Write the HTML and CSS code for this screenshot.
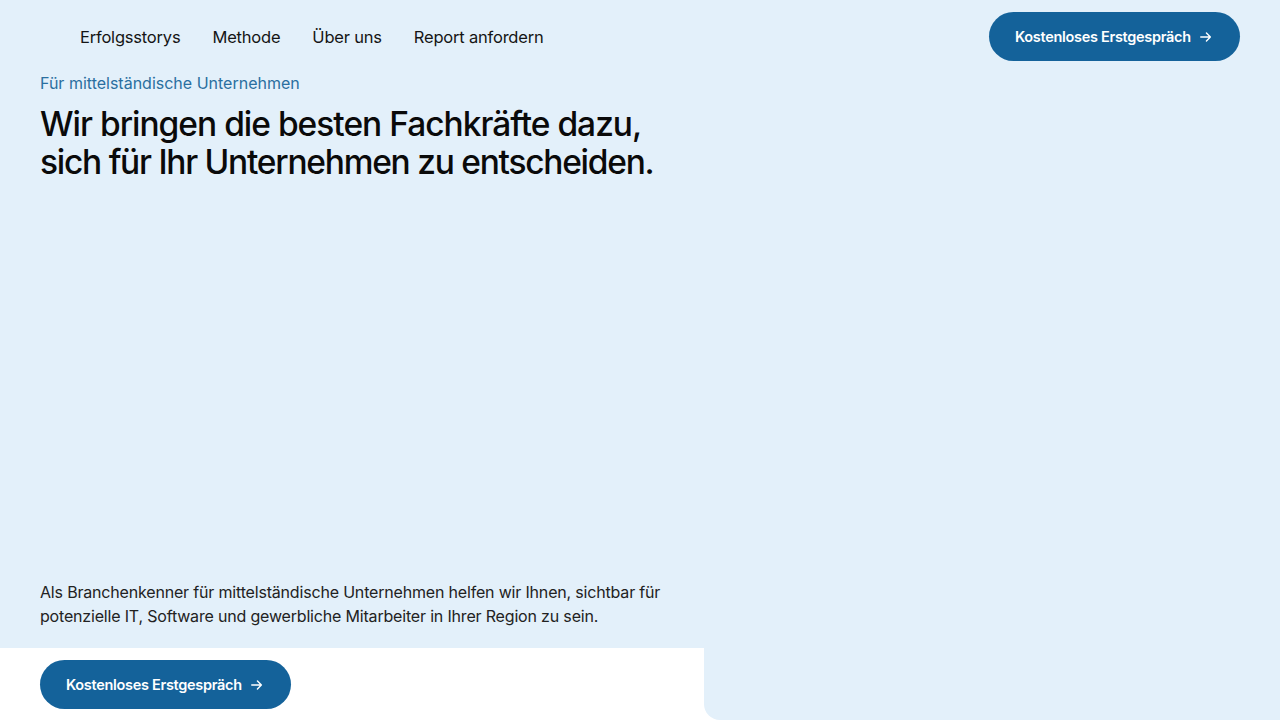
FILE: index.html
```html
<!DOCTYPE html>
<html lang="de">
<head>
<meta charset="utf-8">
<title>Fachkräfte</title>
<link rel="stylesheet" href="styles.css">
</head>
<body>
<div class="page">
  <section class="hero">
    <header class="header">
      <nav class="nav">
        <a href="#">Erfolgsstorys</a>
        <a href="#">Methode</a>
        <a href="#">Über uns</a>
        <a href="#">Report anfordern</a>
      </nav>
      <a class="btn" href="#">Kostenloses Erstgespräch <svg class="arrow" viewBox="0 0 16 16" width="14" height="14"><path d="M2 8h11M8.5 3.5 13 8l-4.5 4.5" fill="none" stroke="currentColor" stroke-width="1.6" stroke-linecap="round" stroke-linejoin="round"/></svg></a>
    </header>
    <div class="intro">
      <p class="eyebrow">Für mittelständische Unternehmen</p>
      <h1 class="title">Wir bringen die besten Fachkräfte dazu,<br><span class="title-2">sich für Ihr Unternehmen zu entscheiden.</span></h1>
    </div>
    <p class="lead">Als Branchenkenner für mittelständische Unternehmen helfen wir Ihnen, sichtbar für potenzielle IT, Software und gewerbliche Mitarbeiter in Ihrer Region zu sein.</p>
  </section>
  <div class="bottom">
    <div class="bottom-left">
      <a class="btn" href="#">Kostenloses Erstgespräch <svg class="arrow" viewBox="0 0 16 16" width="14" height="14"><path d="M2 8h11M8.5 3.5 13 8l-4.5 4.5" fill="none" stroke="currentColor" stroke-width="1.6" stroke-linecap="round" stroke-linejoin="round"/></svg></a>
    </div>
    <div class="bottom-right"></div>
  </div>
</div>
</body>
</html>
```
FILE: styles.css
```css
* { box-sizing: border-box; }
html, body { margin: 0; padding: 0; }
body {
  background: #ffffff;
  font-family: Inter, "Noto Sans", sans-serif;
  color: #111;
}
a { text-decoration: none; color: inherit; }
.page { width: 1280px; height: 720px; overflow: hidden; display: flex; flex-direction: column; }
.hero {
  height: 648px;
  background: #e3f0fa;
  padding: 0 40px;
  display: flex;
  flex-direction: column;
}
.header {
  display: flex;
  align-items: center;
  justify-content: space-between;
  padding: 12px 0 0 40px;
  height: 61px;
}
.nav { display: flex; gap: 32px; font-size: 16.5px; letter-spacing: -0.2px; color: #151515; }
.btn {
  display: inline-flex;
  align-items: center;
  gap: 8px;
  height: 49px;
  padding: 0 26px;
  border-radius: 25px;
  background: #14629a;
  color: #fff;
  font-size: 14.5px;
  font-weight: 600;
  letter-spacing: -0.3px;
  width: 251px;
}
.arrow { display: block; }
.intro { flex: 1; }
.eyebrow { margin: 12px 0 0; font-size: 16px; color: #2a6fa0; letter-spacing: 0; line-height: 20px; }
.title {
  margin: 12px 0 0;
  font-size: 33.5px;
  line-height: 38px;
  font-weight: 500;
  letter-spacing: -1px;
  color: #0a0a0a;
}
.title-2 { letter-spacing: -1.25px; }
.lead {
  margin: 0 0 20px;
  width: 664px;
  font-size: 16px;
  line-height: 24px;
  color: #222;
  letter-spacing: -0.18px;
}
.bottom { flex: 1; display: flex; }
.bottom-left { width: 704px; padding: 12px 40px 0; }
.bottom-right { flex: 1; background: #e3f0fa; border-bottom-left-radius: 16px; }
```
